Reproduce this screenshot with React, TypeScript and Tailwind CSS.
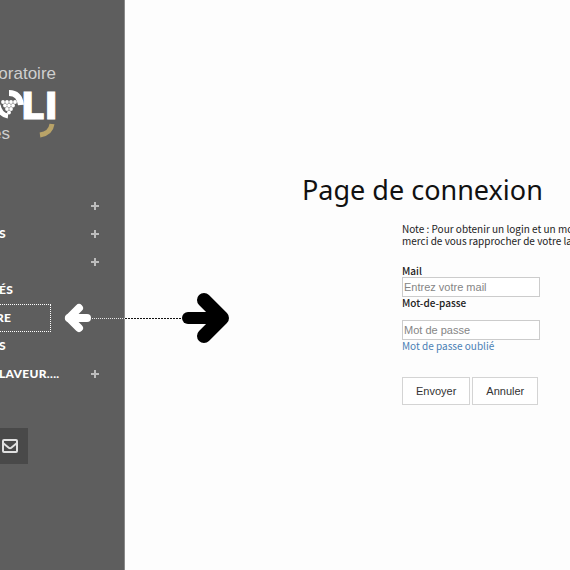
import React from "react";

const menu = [
  { label: "", plus: true },
  { label: "S", plus: true },
  { label: "", plus: true },
  { label: "ÉS", plus: false },
  { label: "RE", plus: false, active: true },
  { label: "S", plus: false },
  { label: "LAVEUR....", plus: true },
];

const Plus = () => (
  <svg viewBox="0 0 8 8" className="h-2 w-2" aria-hidden="true">
    <path d="M4 0v8M0 4h8" stroke="#bdbdbd" strokeWidth="2" />
  </svg>
);

// dotted line with an arrow head at both ends, runs out over the page
const Connector = () => (
  <svg
    viewBox="0 0 166 52"
    className="absolute left-16 top-1/2 h-[52px] w-[166px] -translate-y-1/2"
    fill="none"
    strokeLinecap="round"
    strokeLinejoin="round"
    aria-hidden="true"
  >
    <path d="M28 26.500H61" stroke="#e5e5e5" strokeDasharray="1 1" strokeLinecap="butt" />
    <path d="M61 26.500H118" stroke="#111" strokeDasharray="2 1" strokeLinecap="butt" />
    <path d="M15 16L5 26L15 36" stroke="#fff" strokeWidth="8" />
    <path d="M5 26H23" stroke="#fff" strokeWidth="8" />
    <path d="M140 8L158 26L140 44" stroke="#000" strokeWidth="14" />
    <path d="M124 26H157" stroke="#000" strokeWidth="12" />
  </svg>
);

const Logo = () => (
  <div className="w-14 font-['Liberation_Sans',Arial,sans-serif] text-[17px] leading-5 text-[#cfcfcf]">
    <p className="flex justify-end">oratoire</p>
    <div className="flex h-10 justify-end">
      <svg viewBox="0 0 56 40" className="h-10 w-14 overflow-visible" aria-hidden="true">
        <path d="M9 9C16 9 20 13 21 21" stroke="#fff" strokeWidth="6" fill="none" />
        <path d="M-2 21Q0 31 8 32" stroke="#fff" strokeWidth="5" fill="none" />
        <g fill="#fff">
          <circle cx="3" cy="18" r="1.900" />
          <circle cx="7" cy="18" r="1.900" />
          <circle cx="11" cy="18" r="1.900" />
          <circle cx="15" cy="18" r="1.900" />
          <circle cx="5" cy="21.500" r="1.900" />
          <circle cx="9" cy="21.500" r="1.900" />
          <circle cx="13" cy="21.500" r="1.900" />
          <circle cx="7" cy="25" r="1.900" />
          <circle cx="11" cy="25" r="1.900" />
          <circle cx="9" cy="28.500" r="1.900" />
        </g>
        <text
          x="58"
          y="35"
          textAnchor="end"
          fill="#fff"
          stroke="#fff"
          strokeWidth="1"
          fontFamily="DejaVu Sans, sans-serif"
          fontSize="37"
          fontWeight="700"
        >
          LI
        </text>
      </svg>
    </div>
    <div className="flex items-start justify-between">
      <span className="-ml-2">es</span>
      <svg viewBox="0 0 18 18" className="-mt-1 h-[18px] w-[18px]" aria-hidden="true">
        <path d="M14 4C13 11 9 14 2 15" stroke="#b9a368" strokeWidth="5" fill="none" />
      </svg>
    </div>
  </div>
);

const Sidebar = () => (
  <aside className="relative z-10 w-[125px] shrink-0 border-r border-[#8a8a8a] bg-[#5e5e5e] pt-16">
    <Logo />
    <nav className="mt-12">
      <ul className="font-['Lato',sans-serif] text-xs font-black tracking-wide text-white">
        {menu.map((item, i) => (
          <li key={i} className="relative flex h-7 items-center justify-between pr-[25px]">
            <a
              href="#"
              className={
                item.active
                  ? "-ml-1 flex h-7 w-[55px] items-center border-y border-r border-dotted border-white"
                  : "-ml-px whitespace-nowrap"
              }
            >
              {item.label}
            </a>
            {item.plus && <Plus />}
            {item.active && <Connector />}
          </li>
        ))}
      </ul>
    </nav>
    <a
      href="#"
      aria-label="Contact"
      className="-ml-2 mt-10 flex h-9 w-9 items-center justify-center bg-[#494949]"
    >
      <svg viewBox="0 0 16 14" className="h-3.5 w-4" fill="none" stroke="#e0e0e0" strokeWidth="2" aria-hidden="true">
        <rect x="1" y="1" width="14" height="12" rx="1" />
        <path d="M1 4L7 9Q8 9.600 9 9L15 4" />
      </svg>
    </a>
  </aside>
);

const inputClass =
  "block h-5 w-[138px] border border-[#cccccc] bg-white px-px font-['Liberation_Sans',Arial,sans-serif] text-[11px] text-[#333] placeholder:text-[#858585] outline-none";

const buttonClass =
  "h-7 border border-[#d4d4d4] bg-white px-[13px] font-['Liberation_Sans',Arial,sans-serif] text-[11px] text-[#333]";

const LoginForm = () => {
  const handleSubmit = (e: React.FormEvent) => {
    e.preventDefault();
  };

  return (
    <form
      onSubmit={handleSubmit}
      className="ml-[100px] mt-[13px] font-['Noto_Sans_CJK_SC',sans-serif] text-[10px] leading-3 text-[#222]"
    >
      <p className="whitespace-nowrap">
        Note : Pour obtenir un login et un mo
        <br />
        merci de vous rapprocher de votre la
      </p>
      <label htmlFor="mail" className="mt-[18px] block font-medium">
        Mail
      </label>
      <input id="mail" type="email" placeholder="Entrez votre mail" className={inputClass} />
      <label htmlFor="password" className="mb-[11px] block font-medium">
        Mot-de-passe
      </label>
      <input id="password" type="password" placeholder="Mot de passe" className={inputClass} />
      <a href="#" className="block text-[#4a7fb5]">
        Mot de passe oublié
      </a>
      <div className="mt-[25px] flex gap-0.5">
        <button type="submit" className={buttonClass}>
          Envoyer
        </button>
        <button type="reset" className={buttonClass}>
          Annuler
        </button>
      </div>
    </form>
  );
};

const App = () => {
  return (
    <div className="flex min-h-screen overflow-hidden bg-[#fdfdfd]">
      <Sidebar />
      <main className="min-w-0 flex-1 pl-[177px] pt-[170px]">
        <h1 className="whitespace-nowrap font-['Noto_Sans',sans-serif] text-[27px] leading-10 text-[#111]">
          Page de connexion
        </h1>
        <LoginForm />
      </main>
    </div>
  );
};

export default App;
